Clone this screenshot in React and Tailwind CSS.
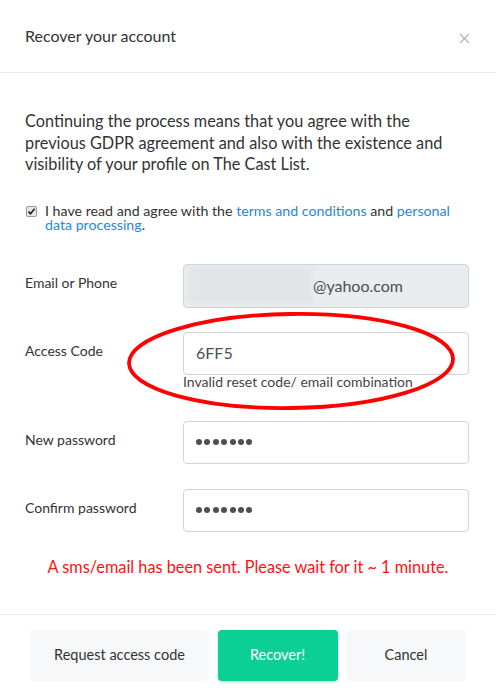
import React from "react";

function Dots() {
  return (
    <div className="flex items-center gap-[2.4px]">
      {[0, 1, 2, 3, 4, 5, 6].map((i) => (
        <span key={i} className="block w-[6px] h-[6px] rounded-full bg-[#495057]" />
      ))}
    </div>
  );
}

function Row({ label, children, className = "" }) {
  return (
    <div className={"flex items-start " + className}>
      <div className="w-[158px] shrink-0 pt-[11px] text-[14px] leading-[16px] text-[#333]">{label}</div>
      <div className="w-[286px]">{children}</div>
    </div>
  );
}

export default function App() {
  return (
    <div className="relative w-[496px] h-[696px] bg-white font-['Lato',sans-serif] text-[#333]">
      <div className="h-[73px] border-b border-[#e9ecef] flex items-center justify-between pl-[25px] pr-[26px]">
        <div className="text-[16px] text-[#333]">Recover your account</div>
        <svg width="11" height="11" viewBox="0 0 11 11" className="mt-[4px]">
          <path d="M1 1 L10 10 M10 1 L1 10" stroke="#b5b5b5" strokeWidth="1.3" />
        </svg>
      </div>

      <div className="px-[25px] pt-[37px]">
        <p className="text-[16.3px] leading-[21.5px] text-[#333]">
          Continuing the process means that you agree with the previous GDPR agreement and also with the existence and visibility of your profile on The Cast List.
        </p>

        <div className="flex items-start mt-[29px]">
          <span className="mt-[2px] ml-[1px] w-[11px] h-[11px] rounded-[2px] border border-[#9a9a9a] bg-[#e6e6e6] flex items-center justify-center shrink-0">
            <svg width="9" height="9" viewBox="0 0 9 9">
              <path d="M1.5 4.6 L3.5 6.8 L7.6 1.8" fill="none" stroke="#222" strokeWidth="1.7" />
            </svg>
          </span>
          <p className="ml-[8px] text-[14.2px] leading-[14.5px] text-[#333]">
            I have read and agree with the <span className="text-[#1e88e5]">terms and conditions</span> and{" "}
            <span className="text-[#1e88e5]">personal data processing</span>.
          </p>
        </div>

        <Row label="Email or Phone" className="mt-[31px]">
          <div className="relative h-[44px] rounded-[4px] border border-[#ced4da] bg-[#e9ecef] flex items-center overflow-hidden">
            <div className="absolute left-[5px] top-[2px] w-[124px] h-[36px] bg-[#e2e5e8] blur-[2px]" />
            <span className="relative ml-[129px] text-[16px] text-[#495057]">@yahoo.com</span>
          </div>
        </Row>

        <Row label="Access Code" className="mt-[24px]">
          <div className="h-[43px] rounded-[4px] border border-[#ced4da] bg-white flex items-center px-[12px] text-[16px] text-[#495057]">
            6FF5
          </div>
          <div className="text-[14px] leading-[14px] text-[#444]">Invalid reset code/ email combination</div>
        </Row>

        <Row label="New password" className="mt-[32px]">
          <div className="h-[43px] rounded-[4px] border border-[#ced4da] bg-white flex items-center px-[12px]">
            <Dots />
          </div>
        </Row>

        <Row label="Confirm password" className="mt-[25px]">
          <div className="h-[43px] rounded-[4px] border border-[#ced4da] bg-white flex items-center px-[12px]">
            <Dots />
          </div>
        </Row>

        <div className="mt-[25px] text-center text-[16.3px] leading-[20px] text-[#ff1111]">
          A sms/email has been sent. Please wait for it ~ 1 minute.
        </div>
      </div>

      <div className="mt-[37px] border-t border-[#e9ecef] pt-[15px] flex justify-center gap-[8.5px]">
        <button className="w-[179px] h-[51px] rounded-[4px] bg-[#f7f8fa] text-[14.5px] text-[#333]">
          Request access code
        </button>
        <button className="w-[120px] h-[51px] rounded-[4px] bg-[#0ccf95] text-[14.5px] text-white shadow-[0_1px_3px_rgba(12,207,149,0.4)]">
          Recover!
        </button>
        <button className="w-[120px] h-[51px] rounded-[4px] bg-[#f7f8fa] text-[14.5px] text-[#333]">
          Cancel
        </button>
      </div>

      <svg
        className="absolute left-[126px] top-[311px] pointer-events-none"
        width="332"
        height="100"
        viewBox="0 0 332 100"
      >
        <ellipse cx="165" cy="50" rx="162" ry="47" fill="none" stroke="#ff0000" strokeWidth="3.8" transform="rotate(-0.8 165 50)" />
      </svg>
    </div>
  );
}
